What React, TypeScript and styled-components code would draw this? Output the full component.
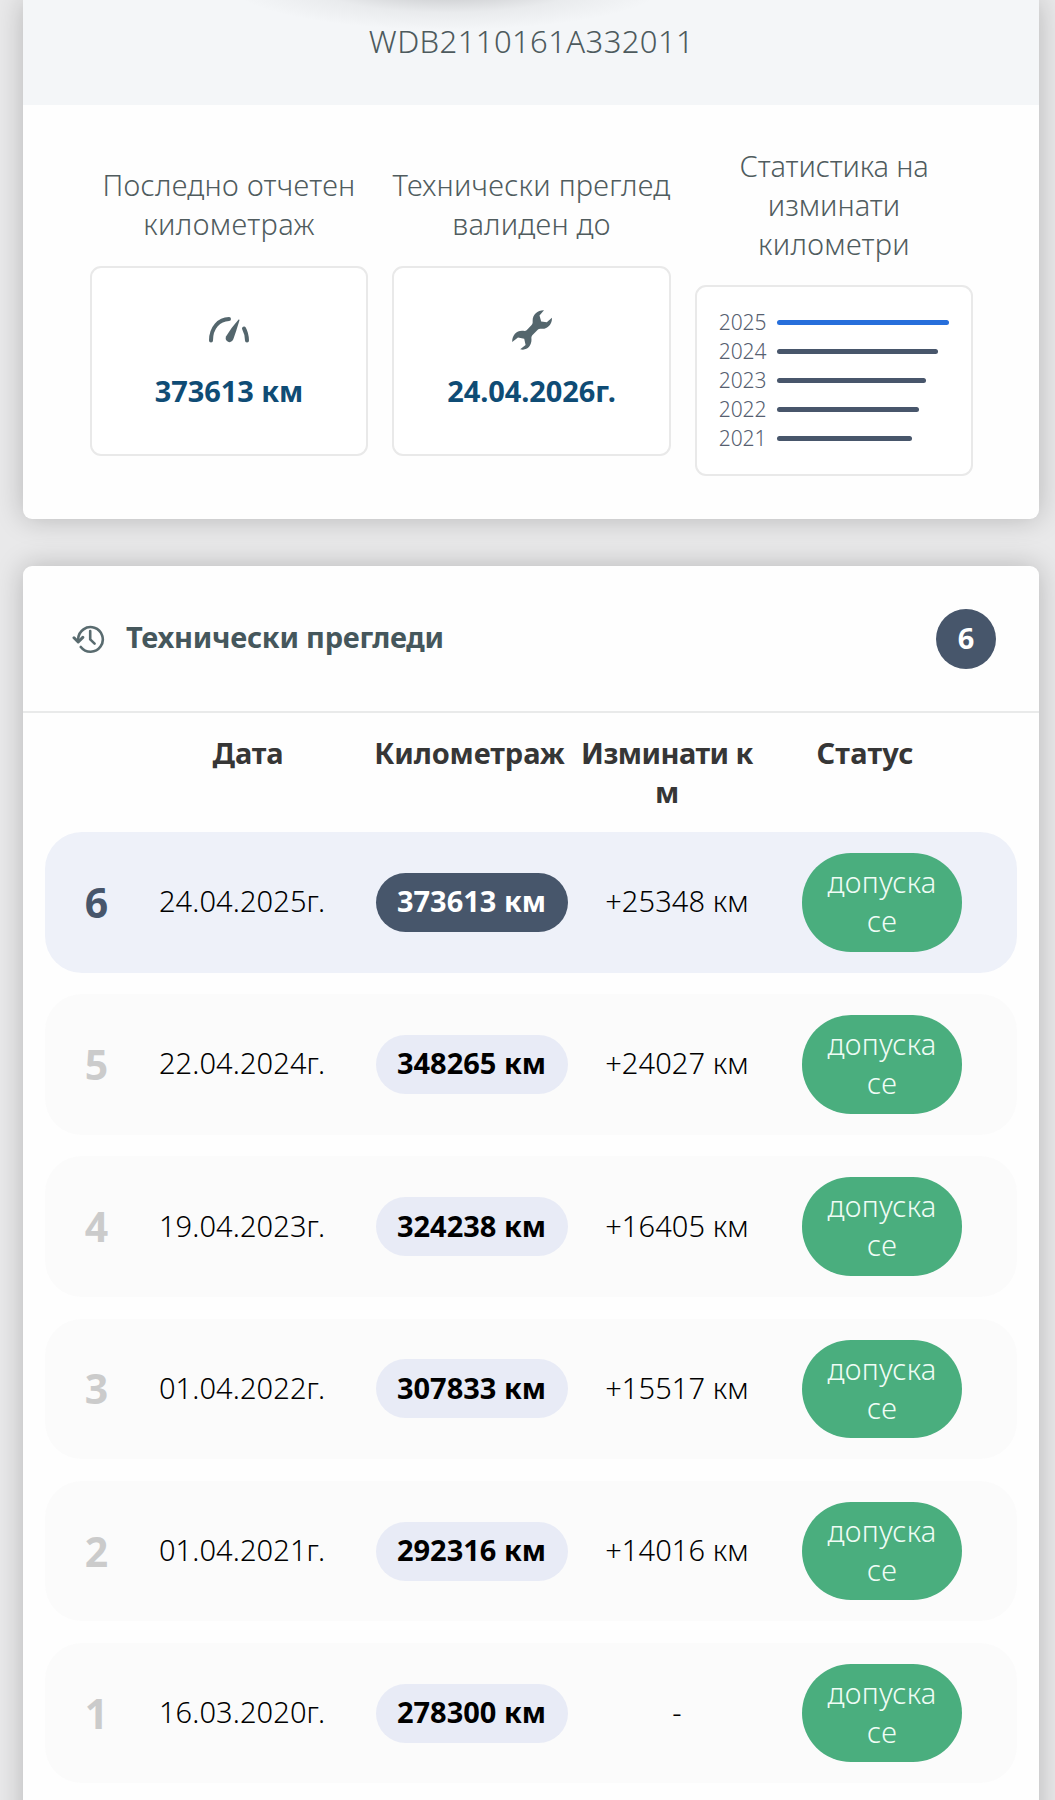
import React from 'react';
import styled, { createGlobalStyle } from 'styled-components';

const GlobalStyle = createGlobalStyle`
  *, *::before, *::after { box-sizing: border-box; }
  html { overflow: hidden; }
  body {
    margin: 0;
    background: #e9e9ea;
    font-family: "Noto Sans", "Open Sans", sans-serif;
    font-size: 29px;
    font-weight: 300;
    line-height: 39px;
    color: #000;
  }
`;

const Page = styled.main`
  display: flex;
  flex-direction: column;
  gap: 47px;
  height: 1800px;
  padding: 0 16px 0 23px;
  overflow: hidden;
`;

const Panel = styled.section`
  flex: none;
  background: #fefefe;
  box-shadow: 0 0 28px rgba(0, 0, 0, 0.22);
`;

const VehiclePanel = styled(Panel)`
  height: 519px;
  border-radius: 0 0 9px 9px;
`;

const HistoryPanel = styled(Panel)`
  height: 1300px;
  border-radius: 9px;
`;

const VinBar = styled.header`
  height: 105px;
  padding: 22px 0 0 1px;
  text-align: center;
  font-size: 31px;
  letter-spacing: 0.4px;
  color: #4d5a5d;
  background:
    radial-gradient(ellipse 220px 46px at 425px -16px, rgba(60, 60, 64, 0.26), rgba(60, 60, 64, 0.17) 35%, rgba(60, 60, 64, 0.06) 62%, rgba(60, 60, 64, 0) 100%),
    #f4f6f8;
`;

const Summary = styled.div`
  display: flex;
  align-items: center;
  justify-content: center;
  gap: 24px;
  height: 411px;
  padding-left: 1px;
`;

const SummaryItem = styled.div`
  display: flex;
  flex-direction: column;
  align-items: center;
  gap: 22.5px;
  width: 278.5px;
`;

const SummaryLabel = styled.div`
  text-align: center;
  white-space: nowrap;
  color: #505c5e;
`;

const Spaced = styled.span<{ $ls: number }>`
  letter-spacing: ${(p) => p.$ls}px;
`;

const SummaryCard = styled.div`
  display: flex;
  flex-direction: column;
  align-items: center;
  width: 100%;
  height: 190.5px;
  border: 2px solid #e9e9e9;
  border-radius: 11px;
  background: #fff;
`;

const CardIcon = styled.div`
  display: flex;
  align-items: center;
  justify-content: center;
  height: 42px;
  margin-top: 41px;
  color: #54666d;
`;

const CardValue = styled.div`
  margin-top: 20px;
  font-weight: 700;
  letter-spacing: -0.1px;
  color: #0f4c75;
`;

const YearChart = styled.div`
  display: flex;
  flex-direction: column;
  width: 100%;
  padding: 20.5px 0 0 22px;
`;

const YearRow = styled.div`
  display: flex;
  align-items: center;
  gap: 10px;
  height: 29px;
  font-size: 21px;
  letter-spacing: -0.1px;
  line-height: 28px;
  color: #566070;
`;

const YearLabel = styled.span`
  width: 48px;
`;

const YearBar = styled.span<{ $current: boolean }>`
  height: 5px;
  border-radius: 3px;
  background: ${(p) => (p.$current ? '#276fdb' : '#48566b')};
`;

const HistoryHeader = styled.header`
  display: flex;
  align-items: center;
  height: 147px;
  padding: 0 43px 0 49px;
  border-bottom: 2px solid #e9eaea;
`;

const HistoryTitle = styled.h2`
  flex: 1;
  margin: 0 0 5px 21px;
  font-size: 29px;
  font-weight: 700;
  letter-spacing: -0.25px;
  color: #45575c;
`;

const CountBadge = styled.div`
  display: flex;
  align-items: center;
  justify-content: center;
  width: 60px;
  height: 60px;
  padding-bottom: 3px;
  border-radius: 50%;
  font-weight: 700;
  color: #fff;
  background: #47566b;
`;

const ColumnHeads = styled.div`
  display: grid;
  grid-template-columns: 236px 207px 188px 208px;
  height: 119px;
  padding: 20px 0 0 107px;
  text-align: center;
  white-space: nowrap;
  font-weight: 700;
  letter-spacing: -0.1px;
  color: #363636;
`;

const RowList = styled.div`
  display: flex;
  flex-direction: column;
  gap: 21.7px;
  padding: 0 22px;
`;

const Row = styled.div<{ $active: boolean }>`
  display: grid;
  grid-template-columns: 103px 188px 271px 140px 270px;
  align-items: center;
  justify-items: center;
  height: 140.5px;
  border-radius: 37px;
  background: ${(p) => (p.$active ? '#eef1f9' : '#fbfbfb')};
`;

const RowNumber = styled.div<{ $active: boolean }>`
  font-size: 41px;
  font-weight: 700;
  color: ${(p) => (p.$active ? '#47566b' : '#cbcbcb')};
`;

const RowText = styled.div`
  margin-bottom: 3px;
  white-space: nowrap;
  letter-spacing: 0.1px;
`;

const MileagePill = styled.div<{ $active: boolean }>`
  width: 192px;
  height: 59px;
  padding-top: 8.5px;
  border-radius: 30px;
  text-align: center;
  font-weight: 700;
  color: ${(p) => (p.$active ? '#fff' : '#000')};
  background: ${(p) => (p.$active ? '#47566b' : '#e8ebf6')};
`;

const StatusPill = styled.div`
  width: 160px;
  height: 98.5px;
  padding: 9px 20px;
  border-radius: 49px;
  text-align: center;
  letter-spacing: 0.3px;
  color: #effcf5;
  background: #4aae7e;
`;

const GaugeIcon = () => (
  <svg width="42" height="28" viewBox="0 0 42 28" fill="none">
    <path d="M3 24.5C3 11.5 11 3.2 21 3" stroke="currentColor" strokeWidth="4" strokeLinecap="round" />
    <path d="M36 12.5Q38.8 17.5 39 24.5" stroke="currentColor" strokeWidth="4" strokeLinecap="round" />
    <path d="M30.6 3.6Q31.6 3 31.4 4.4Q28.6 14 25.3 23.3Q23.9 26.8 20.6 26Q16.6 24.6 18 20.6Q23.5 11.4 30.6 3.6Z" fill="currentColor" />
  </svg>
);

const WrenchIcon = () => (
  <svg width="40" height="40" viewBox="0 0 40 40" fill="currentColor">
    <path d="M32 .3C25 .2 20 5 20.7 12.2Q20.6 14 19.4 15.2L14.6 20.2Q13.4 21.3 11.5 20.8C5 19.8 0 25 .2 31.9L6 27.4L12.2 28.8L13.6 35L8.2 39.2C15 41.3 20.2 35.4 19.4 28.4Q19.2 26.4 20.3 25.2L26 19.4Q27.2 18.4 29 18.7C35.5 19.6 40.4 14 39.9 7.8L34.8 12.2L29.2 11.5L27.5 5.6Z" />
  </svg>
);

const HistoryIcon = () => (
  <svg width="33" height="30" viewBox="0 0 33 30" fill="none" stroke="#596b6f" strokeWidth="2.6" strokeLinecap="round" strokeLinejoin="round">
    <path d="M6.2 15A12.3 12.3 0 1 1 8.8 23" />
    <path d="M2 13.8L6.2 18L10.8 13.4" strokeWidth="3" />
    <path d="M18.2 7V15.4L22.6 19.6" />
  </svg>
);

const yearBars = [
  { year: 2025, width: 172 },
  { year: 2024, width: 161 },
  { year: 2023, width: 149 },
  { year: 2022, width: 142 },
  { year: 2021, width: 135 },
];

const inspections = [
  { no: 6, date: '24.04.2025г.', km: '373613 км', diff: '+25348 км' },
  { no: 5, date: '22.04.2024г.', km: '348265 км', diff: '+24027 км' },
  { no: 4, date: '19.04.2023г.', km: '324238 км', diff: '+16405 км' },
  { no: 3, date: '01.04.2022г.', km: '307833 км', diff: '+15517 км' },
  { no: 2, date: '01.04.2021г.', km: '292316 км', diff: '+14016 км' },
  { no: 1, date: '16.03.2020г.', km: '278300 км', diff: '-' },
];

export default function App() {
  return (
    <>
      <GlobalStyle />
      <Page>
        <VehiclePanel>
          <VinBar>WDB2110161A332011</VinBar>
          <Summary>
            <SummaryItem>
              <SummaryLabel>
                <Spaced $ls={0.3}>Последно отчетен</Spaced>
                <br />
                <Spaced $ls={0.4}>километраж</Spaced>
              </SummaryLabel>
              <SummaryCard>
                <CardIcon><GaugeIcon /></CardIcon>
                <CardValue>373613 км</CardValue>
              </SummaryCard>
            </SummaryItem>
            <SummaryItem>
              <SummaryLabel>
                <Spaced $ls={0.25}>Технически преглед</Spaced>
                <br />
                <Spaced $ls={0.2}>валиден до</Spaced>
              </SummaryLabel>
              <SummaryCard>
                <CardIcon><WrenchIcon /></CardIcon>
                <CardValue>24.04.2026г.</CardValue>
              </SummaryCard>
            </SummaryItem>
            <SummaryItem>
              <SummaryLabel>
                <Spaced $ls={-0.15}>Статистика на</Spaced>
                <br />
                <Spaced $ls={0}>изминати</Spaced>
                <br />
                <Spaced $ls={0.3}>километри</Spaced>
              </SummaryLabel>
              <SummaryCard>
                <YearChart>
                  {yearBars.map((b, i) => (
                    <YearRow key={b.year}>
                      <YearLabel>{b.year}</YearLabel>
                      <YearBar $current={i === 0} style={{ width: b.width }} />
                    </YearRow>
                  ))}
                </YearChart>
              </SummaryCard>
            </SummaryItem>
          </Summary>
        </VehiclePanel>

        <HistoryPanel>
          <HistoryHeader>
            <HistoryIcon />
            <HistoryTitle>Технически прегледи</HistoryTitle>
            <CountBadge>6</CountBadge>
          </HistoryHeader>
          <ColumnHeads>
            <div>Дата</div>
            <div>Километраж</div>
            <div>
              <Spaced $ls={-0.55}>Изминати к</Spaced>
              <br />м
            </div>
            <Spaced $ls={0.2}>Статус</Spaced>
          </ColumnHeads>
          <RowList>
            {inspections.map((r, i) => (
              <Row key={r.no} $active={i === 0}>
                <RowNumber $active={i === 0}>{r.no}</RowNumber>
                <RowText>{r.date}</RowText>
                <MileagePill $active={i === 0}>{r.km}</MileagePill>
                <RowText>{r.diff}</RowText>
                <StatusPill>
                  допуска
                  <br />
                  се
                </StatusPill>
              </Row>
            ))}
          </RowList>
        </HistoryPanel>
      </Page>
    </>
  );
}
